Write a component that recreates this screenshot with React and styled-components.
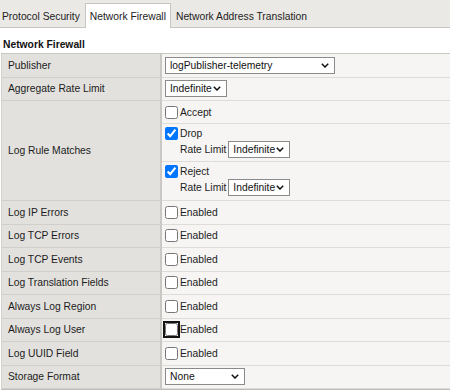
import React from 'react';
import styled, { createGlobalStyle } from 'styled-components';

const GlobalStyle = createGlobalStyle`
  body {
    margin: 0;
    background: #ffffff;
    font-family: "Liberation Sans", Arial, sans-serif;
    font-size: 10.3px;
    color: #1a1a1a;
  }
`;

const Page = styled.div`
  width: 450px;
`;

const TabBar = styled.div`
  display: flex;
  align-items: flex-end;
  height: 27px;
  background: #ebe9e5;
  border-bottom: 1px solid #c6c5c1;
`;

const Tab = styled.div`
  height: 24px;
  line-height: 26px;
  padding: 0 4px;
  margin-bottom: -1px;
  border: 1px solid ${(p) => (p.$active ? '#c6c5c1' : 'transparent')};
  border-bottom: none;
  background: ${(p) => (p.$active ? '#ffffff' : 'transparent')};
  color: #222;
  white-space: nowrap;

  &:first-child {
    padding-left: 1px;
  }
`;

const Heading = styled.h3`
  margin: 0;
  padding: 11px 3px 2px;
  line-height: 12px;
  font-size: 10.3px;
  font-weight: bold;
  color: #111;
`;

const Form = styled.div`
  display: grid;
  grid-template-columns: 160px 1fr;
  margin-left: 1px;
  border-top: 1px solid #c9c8c4;
  border-left: 1px solid #d3d2ce;
  border-bottom: 1px solid #bdbcb8;
`;

const Label = styled.div`
  display: flex;
  align-items: center;
  min-height: ${(p) => p.$h || 22.5}px;
  padding-left: 6px;
  background: #e2e1dd;
  border-bottom: 1px solid #d0cfcb;
  border-right: 2px solid #c9c8c4;
  color: #1c1c1c;
`;

const Value = styled.div`
  display: flex;
  flex-direction: ${(p) => (p.$stack ? 'column' : 'row')};
  align-items: ${(p) => (p.$stack ? 'stretch' : 'center')};
  min-height: 22.5px;
  background: #f6f5f3;
  border-bottom: 1px solid #dddcd8;
  padding-left: ${(p) => (p.$stack ? 0 : 3)}px;
`;

const SubRow = styled.div`
  display: flex;
  flex-direction: column;
  justify-content: center;
  gap: 1px;
  height: ${(p) => p.$h}px;
  padding-left: 3px;
  border-bottom: 1px solid ${(p) => (p.$last ? 'transparent' : '#dddcd8')};
`;

const Line = styled.div`
  display: flex;
  align-items: center;
  gap: ${(p) => p.$gap || 0}px;
  padding-left: ${(p) => p.$indent || 0}px;
`;

const Check = styled.input.attrs({ type: 'checkbox' })`
  width: 13px;
  height: 13px;
  margin: 0 2px 0 0;
  accent-color: #0075ff;
  outline: ${(p) => (p.$focused ? '2px solid #141414' : 'none')};
  outline-offset: 0;
  border-radius: 2px;
`;

const SelectBox = styled.div`
  display: inline-flex;
  align-items: center;
  justify-content: space-between;
  box-sizing: border-box;
  width: ${(p) => p.$w}px;
  height: 17px;
  padding: 0 5px 0 4px;
  background: #ffffff;
  border: 1px solid #8a8a8a;
  color: #111;
  white-space: nowrap;
`;

const Text = styled.span`
  color: #1c1c1c;
`;

const Chevron = () => (
  <svg width="8" height="5" viewBox="0 0 8 5">
    <polyline points="0.8,0.8 4,4 7.2,0.8" fill="none" stroke="#111" strokeWidth="1.5" />
  </svg>
);

function Select({ w, value }) {
  return (
    <SelectBox $w={w}>
      <span>{value}</span>
      <Chevron />
    </SelectBox>
  );
}

const simpleChecks = [
  ['Log IP Errors'],
  ['Log TCP Errors'],
  ['Log TCP Events'],
  ['Log Translation Fields'],
  ['Always Log Region'],
  ['Always Log User', true],
  ['Log UUID Field'],
];

function RateLimit() {
  return (
    <Line $indent={15} $gap={2}>
      <Text>Rate Limit</Text>
      <Select w={62} value="Indefinite" />
    </Line>
  );
}

export default function App() {
  return (
    <Page>
      <GlobalStyle />
      <TabBar>
        <Tab>Protocol Security</Tab>
        <Tab $active>Network Firewall</Tab>
        <Tab>Network Address Translation</Tab>
      </TabBar>

      <Heading>Network Firewall</Heading>

      <Form>
        <Label>Publisher</Label>
        <Value>
          <Select w={170} value="logPublisher-telemetry" />
        </Value>

        <Label>Aggregate Rate Limit</Label>
        <Value>
          <Select w={62} value="Indefinite" />
        </Value>

        <Label $h={98}>Log Rule Matches</Label>
        <Value $stack>
          <SubRow $h={22}>
            <Line>
              <Check />
              <Text>Accept</Text>
            </Line>
          </SubRow>
          <SubRow $h={37}>
            <Line>
              <Check defaultChecked />
              <Text>Drop</Text>
            </Line>
            <RateLimit />
          </SubRow>
          <SubRow $h={37} $last>
            <Line>
              <Check defaultChecked />
              <Text>Reject</Text>
            </Line>
            <RateLimit />
          </SubRow>
        </Value>

        {simpleChecks.map(([name, focused]) => (
          <React.Fragment key={name}>
            <Label>{name}</Label>
            <Value>
              <Check $focused={focused} />
              <Text>Enabled</Text>
            </Value>
          </React.Fragment>
        ))}

        <Label>Storage Format</Label>
        <Value>
          <Select w={80} value="None" />
        </Value>
      </Form>
    </Page>
  );
}
